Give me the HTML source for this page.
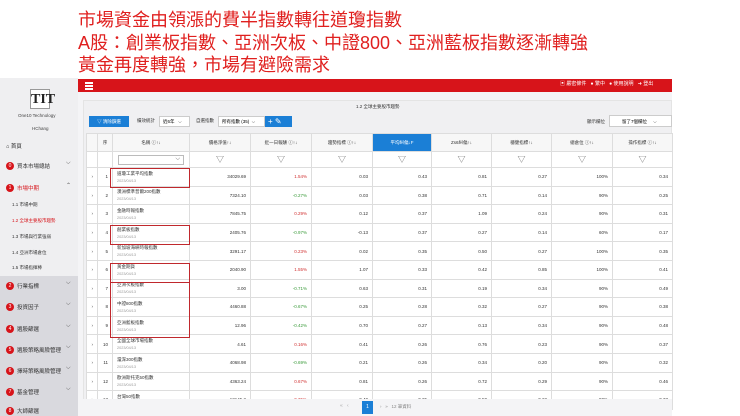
<!DOCTYPE html><html><head><meta charset="utf-8"><style>
*{margin:0;padding:0;box-sizing:border-box}
body{width:740px;height:416px;overflow:hidden;background:#fff;font-family:"Liberation Sans","Noto Sans CJK TC",sans-serif;position:relative}
.t{position:absolute;left:78px;color:#e0201f;font-size:18px;line-height:21px;font-family:"Liberation Sans","Noto Sans CJK TC",sans-serif}
.a{position:absolute}
.sb{position:absolute;left:0;top:78px;width:78px;height:338px;background:#efeff1}
.sb2{position:absolute;left:0;top:276px;width:78px;height:140px;background:#d9d9de}
.si{position:absolute;left:6px;font-size:5.5px;color:#333;display:flex;align-items:center;gap:3px}
.dot{width:8px;height:8px;border-radius:50%;background:#d7141a;color:#fff;font-size:5px;text-align:center;line-height:8px}
.ch{position:absolute;left:66px;font-size:6px;color:#555}
table{position:absolute;left:86px;top:133px;border-collapse:collapse;font-size:4.5px;color:#333;background:#fff}
td{border:1px solid #ddd;height:18.6px;text-align:right;padding:0 4px}
td.n{text-align:left;padding-left:4px}
td.n small{display:block;color:#999;font-size:3.8px;margin-top:2px}
tr.h td{height:18px;text-align:center;background:#f7f7f7}
tr.f td{height:16px;text-align:center;color:#666;font-size:8px}
.g{color:#3a9a3a}.r{color:#d03030}
.box{position:absolute;border:1.5px solid #c0282d}
</style></head><body>
<div class="t" style="top:10px">市場資金由領漲的費半指數轉往道瓊指數</div>
<div class="t" style="top:33px">A股：創業板指數、亞洲次板、中證800、亞洲藍板指數逐漸轉強</div>
<div class="t" style="top:55px">黃金再度轉強，市場有避險需求</div>
<div class="a" style="left:78px;top:79px;width:594px;height:13px;background:#d7141a"></div>
<div class="a" style="left:85px;top:82px;width:8px;height:1.5px;background:#fff;box-shadow:0 3px #fff,0 6px #fff"></div>
<div class="a" style="left:560px;top:80px;font-size:5px;color:#fff;white-space:nowrap">▣ 嚴密條件 &nbsp; ● 繁中 &nbsp; ● 使用說明 &nbsp; ➜ 登出</div>
<div class="a" style="left:78px;top:92px;width:594px;height:324px;background:#f4f4f6"></div>
<div class="a" style="left:83px;top:100px;width:589px;height:300px;background:#f0f0f2;border:1px solid #e4e4e4"></div>
<div class="a" style="left:356px;top:104px;font-size:4.5px;color:#333">1.2 全球主要股市趨勢</div>
<div class="a" style="left:89px;top:116px;width:40px;height:11px;background:#1b7fd6;color:#fff;font-size:4.5px;line-height:11px;text-align:center">▽ 清除篩選</div>
<div class="a" style="left:137px;top:118px;font-size:4.5px;color:#333">績效統計</div>
<div class="a" style="left:159px;top:116px;width:31px;height:11px;background:#fff;border:1px solid #ccc;font-size:4.5px;line-height:10px;padding-left:3px">近6年 &nbsp; ⌵</div>
<div class="a" style="left:196px;top:118px;font-size:4.5px;color:#333">自選指數</div>
<div class="a" style="left:218px;top:116px;width:47px;height:11px;background:#fff;border:1px solid #ccc;font-size:4.5px;line-height:10px;padding-left:3px">所有指數 (35) &nbsp;⌵</div>
<div class="a" style="left:265px;top:116px;width:27px;height:11px;background:#1b7fd6;color:#fff;font-size:8px;line-height:11px;padding-left:3px">+ ✎</div>
<div class="a" style="left:587px;top:119px;font-size:4.5px;color:#333">顯示欄位</div>
<div class="a" style="left:609px;top:115px;width:63px;height:12px;background:#fff;border:1px solid #ccc;font-size:4.5px;line-height:11px;padding-left:12px">留了7個欄位 &nbsp; &nbsp; ⌵</div>
<div class="sb"></div><div class="sb2"></div>
<div class="a" style="left:30px;top:89px;width:20px;height:20px;border:1px solid #999;background:#fff;font:bold 14px 'Liberation Serif',serif;text-align:center;line-height:19px;color:#222">TIT</div>
<div class="a" style="left:18px;top:113px;font-size:4.5px;color:#444">One10 Technology</div>
<div class="a" style="left:32px;top:126px;font-size:4.5px;color:#444">HChang</div>
<div class="si" style="top:142px">⌂ 首頁</div>
<div class="si" style="top:162px"><span class="dot">0</span>買本市場總結</div><div class="ch" style="top:160px">⌵</div>
<div class="si" style="top:184px;color:#d7141a"><span class="dot">1</span>市場中期</div><div class="ch" style="top:182px">⌃</div>
<div class="si" style="top:202px;left:12px;font-size:4.5px">1.1 市場中期</div>
<div class="si" style="top:218px;left:12px;font-size:4.5px;color:#d7141a">1.2 全球主要股市趨勢</div>
<div class="si" style="top:234px;left:12px;font-size:4.5px">1.3 市場與行業強弱</div>
<div class="si" style="top:250px;left:12px;font-size:4.5px">1.4 亞洲市場倉位</div>
<div class="si" style="top:265px;left:12px;font-size:4.5px">1.5 市場指揮棒</div>
<div class="si" style="top:282px"><span class="dot">2</span>行業指標</div><div class="ch" style="top:280px">⌵</div>
<div class="si" style="top:303px"><span class="dot">3</span>投資因子</div><div class="ch" style="top:301px">⌵</div>
<div class="si" style="top:325px"><span class="dot">4</span>選股篩選</div><div class="ch" style="top:323px">⌵</div>
<div class="si" style="top:346px"><span class="dot">5</span>選股策略風險管理</div><div class="ch" style="top:344px">⌵</div>
<div class="si" style="top:367px"><span class="dot">6</span>擇時策略風險管理</div><div class="ch" style="top:365px">⌵</div>
<div class="si" style="top:388px"><span class="dot">7</span>基金管理</div><div class="ch" style="top:386px">⌵</div>
<div class="si" style="top:407px"><span class="dot">8</span>大師篩選</div>
<table>
<colgroup><col style="width:11px"><col style="width:15px"><col style="width:77px"><col style="width:61px"><col style="width:61px"><col style="width:61px"><col style="width:59px"><col style="width:60px"><col style="width:60px"><col style="width:61px"><col style="width:60px"></colgroup>
<tr class="h"><td></td><td>序</td><td>名稱 ⓘ↑↓</td><td>價格淨值↑↓</td><td>近一日報酬 ⓘ↑↓</td><td>趨勢指標 ⓘ↑↓</td><td style="background:#1b7fd6;color:#fff">平均糾偏↓F</td><td>Zs6糾偏↑↓</td><td>穩健指標↑↓</td><td>總倉位 ⓘ↑↓</td><td>操作指標 ⓘ↑↓</td></tr>
<tr class="f"><td></td><td></td><td><div style="margin:0 auto;width:66px;height:10px;border:1px solid #bbb;text-align:right;font-size:6px;padding-right:3px">⌵</div></td><td>▽</td><td>▽</td><td>▽</td><td>▽</td><td>▽</td><td>▽</td><td>▽</td><td>▽</td></tr>
<tr><td>›</td><td>1</td><td class="n">道瓊工業平均指數<small>2023/04/13</small></td><td>34029.69</td><td class="r">1.54%</td><td>0.03</td><td>0.43</td><td>0.81</td><td>0.27</td><td>100%</td><td>0.34</td></tr>
<tr><td>›</td><td>2</td><td class="n">澳洲標準普爾200指數<small>2023/04/13</small></td><td>7324.10</td><td class="g">-0.27%</td><td>0.03</td><td>0.38</td><td>0.71</td><td>0.14</td><td>90%</td><td>0.25</td></tr>
<tr><td>›</td><td>3</td><td class="n">金融時報指數<small>2023/04/13</small></td><td>7845.75</td><td class="r">0.29%</td><td>0.12</td><td>0.37</td><td>1.09</td><td>0.24</td><td>90%</td><td>0.31</td></tr>
<tr><td>›</td><td>4</td><td class="n">創業板指數<small>2023/04/13</small></td><td>2405.76</td><td class="g">-0.97%</td><td>-0.13</td><td>0.37</td><td>0.27</td><td>0.14</td><td>60%</td><td>0.17</td></tr>
<tr><td>›</td><td>5</td><td class="n">新加坡海峽時報指數<small>2023/04/13</small></td><td>3291.17</td><td class="r">0.23%</td><td>0.02</td><td>0.35</td><td>0.50</td><td>0.27</td><td>100%</td><td>0.35</td></tr>
<tr><td>›</td><td>6</td><td class="n">黃金期貨<small>2023/04/13</small></td><td>2040.90</td><td class="r">1.55%</td><td>1.07</td><td>0.33</td><td>0.42</td><td>0.85</td><td>100%</td><td>0.41</td></tr>
<tr><td>›</td><td>7</td><td class="n">亞洲次板指數<small>2023/04/13</small></td><td>3.00</td><td class="g">-0.71%</td><td>0.63</td><td>0.31</td><td>0.19</td><td>0.34</td><td>90%</td><td>0.49</td></tr>
<tr><td>›</td><td>8</td><td class="n">中證800指數<small>2023/04/13</small></td><td>4460.88</td><td class="g">-0.67%</td><td>0.25</td><td>0.28</td><td>0.32</td><td>0.27</td><td>90%</td><td>0.38</td></tr>
<tr><td>›</td><td>9</td><td class="n">亞洲藍板指數<small>2023/04/13</small></td><td>12.96</td><td class="g">-0.42%</td><td>0.70</td><td>0.27</td><td>0.13</td><td>0.34</td><td>90%</td><td>0.48</td></tr>
<tr><td>›</td><td>10</td><td class="n">全國全球市場指數<small>2023/04/13</small></td><td>4.61</td><td class="r">0.16%</td><td>0.41</td><td>0.26</td><td>0.76</td><td>0.23</td><td>90%</td><td>0.37</td></tr>
<tr><td>›</td><td>11</td><td class="n">滬深300指數<small>2023/04/13</small></td><td>4068.98</td><td class="g">-0.69%</td><td>0.21</td><td>0.26</td><td>0.34</td><td>0.20</td><td>90%</td><td>0.32</td></tr>
<tr><td>›</td><td>12</td><td class="n">歐洲斯托克50指數<small>2023/04/13</small></td><td>4363.24</td><td class="r">0.67%</td><td>0.81</td><td>0.26</td><td>0.72</td><td>0.29</td><td>90%</td><td>0.46</td></tr>
<tr><td>›</td><td>13</td><td class="n">台灣50指數<small>2023/04/13</small></td><td>13145.2</td><td class="r">0.35%</td><td>0.40</td><td>0.25</td><td>0.50</td><td>0.22</td><td>90%</td><td>0.33</td></tr>
</table>
<div class="a" style="left:83px;top:399px;width:589px;height:17px;background:#f4f4f6"></div>
<div class="a" style="left:340px;top:403px;font-size:5px;color:#aaa">« &nbsp; ‹</div>
<div class="a" style="left:362px;top:401px;width:11px;height:13px;background:#1b7fd6;color:#fff;font-size:5px;text-align:center;line-height:13px">1</div>
<div class="a" style="left:380px;top:404px;font-size:4.5px;color:#888">› &nbsp; » &nbsp; 12 筆資料</div>
<div class="box" style="left:110px;top:168px;width:80px;height:20px"></div>
<div class="box" style="left:110px;top:225px;width:80px;height:20px"></div>
<div class="box" style="left:110px;top:263px;width:80px;height:20px"></div>
<div class="box" style="left:110px;top:282px;width:80px;height:56px"></div>
</body></html>
